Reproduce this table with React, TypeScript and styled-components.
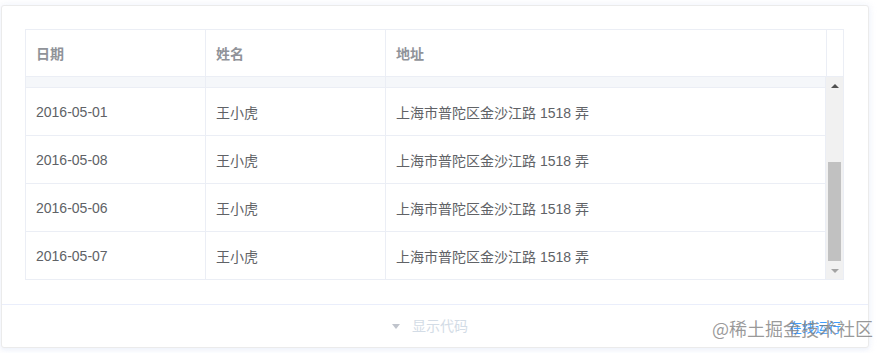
import React from 'react';
import styled, { createGlobalStyle } from 'styled-components';

interface Row {
  date: string;
  name: string;
  address: string;
}

const rows: Row[] = [
  { date: '2016-05-01', name: '王小虎', address: '上海市普陀区金沙江路 1518 弄' },
  { date: '2016-05-08', name: '王小虎', address: '上海市普陀区金沙江路 1518 弄' },
  { date: '2016-05-06', name: '王小虎', address: '上海市普陀区金沙江路 1518 弄' },
  { date: '2016-05-07', name: '王小虎', address: '上海市普陀区金沙江路 1518 弄' },
];

const App: React.FC = () => {
  return (
    <Page>
      <GlobalStyle />
      <DemoBlock>
        <Source>
          <Table>
            <HeadRow>
              <HeadCell $width={180}>日期</HeadCell>
              <HeadCell $width={180}>姓名</HeadCell>
              <HeadCell>地址</HeadCell>
              <Gutter />
            </HeadRow>
            <Body>
              <Rows>
                <PeekRow>
                  <PeekCell $width={180} />
                  <PeekCell $width={180} />
                  <PeekCell />
                </PeekRow>
                {rows.map((row) => (
                  <BodyRow key={row.date}>
                    <Cell $width={180}>{row.date}</Cell>
                    <Cell $width={180}>{row.name}</Cell>
                    <Cell>{row.address}</Cell>
                  </BodyRow>
                ))}
              </Rows>
              <ScrollTrack>
                <Arrow $up />
                <ThumbArea>
                  <Thumb />
                </ThumbArea>
                <Arrow />
              </ScrollTrack>
            </Body>
          </Table>
        </Source>
        <Control>
          <Caret />
          <ControlText>显示代码</ControlText>
          <RunButton>在线运行</RunButton>
        </Control>
      </DemoBlock>
      <Watermark>@稀土掘金技术社区</Watermark>
    </Page>
  );
};

export default App;

const GlobalStyle = createGlobalStyle`
  body {
    margin: 0;
    background: #ffffff;
    font-family: "Liberation Sans", Arial, "Noto Sans CJK SC", sans-serif;
  }
`;

const Page = styled.div`
  position: relative;
  width: 887px;
  height: 353px;
  padding: 5px 0 0 1px;
  box-sizing: border-box;
  overflow: hidden;
`;

const DemoBlock = styled.div`
  width: 868px;
  border: 1px solid #ebebeb;
  border-radius: 3px;
  box-sizing: border-box;
  background: #fff;
  box-shadow: 0 0 8px 0 rgba(232, 237, 250, 0.6), 0 2px 4px 0 rgba(232, 237, 250, 0.5);
`;

const Source = styled.div`
  padding: 23px 24px 24px 23px;
`;

const Table = styled.div`
  border: 1px solid #ebeef5;
  border-bottom: none;
  font-size: 14px;
  color: #606266;
`;

const HeadRow = styled.div`
  display: flex;
  height: 47px;
  border-bottom: 1px solid #ebeef5;
  box-sizing: border-box;
`;

const HeadCell = styled.div<{ $width?: number }>`
  ${(p) => (p.$width ? `width: ${p.$width}px; flex: none;` : 'flex: 1;')}
  display: flex;
  align-items: center;
  padding-left: 10px;
  box-sizing: border-box;
  border-right: 1px solid #ebeef5;
  color: #909399;
  font-weight: bold;
`;

const Gutter = styled.div`
  width: 16px;
  flex: none;
`;

const Body = styled.div`
  display: flex;
`;

const Rows = styled.div`
  flex: 1;
`;

const PeekRow = styled.div`
  display: flex;
  height: 10px;
  background: #f5f7fa;
  border-bottom: 1px solid #ebeef5;
`;

const PeekCell = styled.div<{ $width?: number }>`
  ${(p) => (p.$width ? `width: ${p.$width}px; flex: none;` : 'flex: 1;')}
  border-right: 1px solid #ebeef5;
  box-sizing: border-box;
`;

const BodyRow = styled.div`
  display: flex;
  height: 48px;
  border-bottom: 1px solid #ebeef5;
  box-sizing: border-box;
`;

const Cell = styled.div<{ $width?: number }>`
  ${(p) => (p.$width ? `width: ${p.$width}px; flex: none;` : 'flex: 1;')}
  display: flex;
  align-items: center;
  padding-left: 10px;
  box-sizing: border-box;
  border-right: 1px solid #ebeef5;
`;

const ScrollTrack = styled.div`
  width: 17px;
  flex: none;
  display: flex;
  flex-direction: column;
  background: #f1f1f1;
  border-bottom: 1px solid #ebeef5;
  box-sizing: border-box;
`;

const Arrow = styled.div<{ $up?: boolean }>`
  height: 17px;
  flex: none;
  display: flex;
  align-items: center;
  justify-content: center;
  &::before {
    content: '';
    width: 0;
    height: 0;
    border-left: 4px solid transparent;
    border-right: 4px solid transparent;
    ${(p) =>
      p.$up
        ? 'border-bottom: 4px solid #505050;'
        : 'border-top: 4px solid #a3a3a3;'}
  }
`;

const ThumbArea = styled.div`
  flex: 1;
  display: flex;
  flex-direction: column;
  justify-content: flex-end;
  padding: 0 2px 1px;
`;

const Thumb = styled.div`
  height: 99px;
  background: #c1c1c1;
`;

const Control = styled.div`
  position: relative;
  height: 43px;
  border-top: 1px solid #eaeefb;
  box-sizing: border-box;
  display: flex;
  align-items: center;
  justify-content: center;
  gap: 12px;
  padding-right: 10px;
  color: #d3dce6;
  font-size: 14px;
`;

const Caret = styled.span`
  width: 0;
  height: 0;
  border-left: 4px solid transparent;
  border-right: 4px solid transparent;
  border-top: 5px solid #c0c4cc;
  margin-top: 1px;
`;

const ControlText = styled.span`
  line-height: 1;
`;

const RunButton = styled.span`
  position: absolute;
  right: 27px;
  top: 50%;
  transform: translateY(-50%);
  color: #409eff;
  font-size: 13px;
`;

const Watermark = styled.div`
  position: absolute;
  left: 712px;
  top: 318px;
  font-size: 18px;
  line-height: 20px;
  color: rgba(120, 120, 120, 0.75);
  font-family: "Noto Sans CJK SC", sans-serif;
  white-space: nowrap;
`;
